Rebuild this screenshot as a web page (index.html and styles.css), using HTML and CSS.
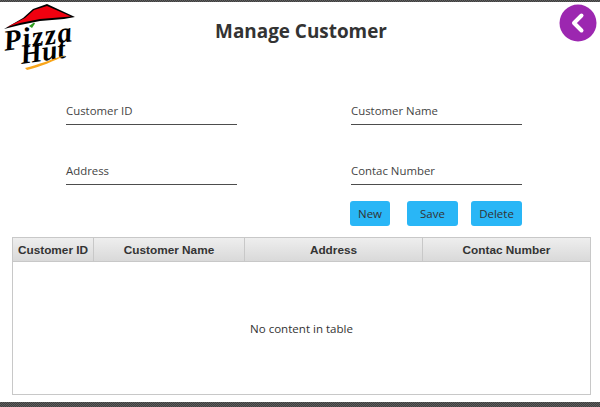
FILE: index.html
```html
<!DOCTYPE html>
<html lang="en">
<head>
    <meta charset="UTF-8">
    <meta name="viewport" content="width=device-width, initial-scale=1.0">
    <title>Manage Customer</title>
    <link rel="stylesheet" href="styles.css">
</head>
<body>
    <div class="window">
        <div class="strip strip-top"></div>
        <!-- Header -->
        <header class="header">
            <div class="logo">
                <svg class="logo-hat" width="76" height="30" viewBox="0 0 76 30">
                    <path d="M4 29 L23 18 L33 9 L47 4 L75 17 L64 19 L40 21 L20 25 Z" fill="#000"/>
                    <path d="M7 27 L25 18 L34 10 L47 6 L71 16.500 L40 19 L20 23 Z" fill="#f0000f"/>
                    <path d="M29 26 L34 22.500 L35 23.500 L32 28 Z" fill="#2f9e1f"/>
                </svg>
                <span class="logo-pizza">Pizza</span>
                <span class="logo-hut">Hut</span>
                <svg class="logo-swoosh" width="44" height="16" viewBox="0 0 44 16">
                    <path d="M1 14 C14 11 28 5 42 1 C30 7 16 13 3 16 Z" fill="#f9a51a"/>
                </svg>
            </div>
            <h1 class="title">Manage Customer</h1>
            <button class="back-button" aria-label="Back">
                <svg width="38" height="38" viewBox="0 0 38 38">
                    <circle cx="19" cy="19" r="18.500" fill="#9c27b0"/>
                    <path d="M22.500 11.500 L15 19 L22.500 26.500" fill="none" stroke="#fff" stroke-width="4" stroke-linecap="round" stroke-linejoin="round"/>
                </svg>
            </button>
        </header>

        <!-- Form -->
        <div class="form-grid">
            <div class="field">Customer ID</div>
            <div class="field">Customer Name</div>
            <div class="field">Address</div>
            <div class="field">Contac Number</div>
        </div>
        <div class="button-row">
            <button class="action new">New</button>
            <button class="action save">Save</button>
            <button class="action delete">Delete</button>
        </div>

        <!-- Table -->
        <div class="table-box">
            <div class="table-head">
                <div class="col col-id">Customer ID</div>
                <div class="col col-name">Customer Name</div>
                <div class="col col-address">Address</div>
                <div class="col col-contact">Contac Number</div>
            </div>
            <div class="table-empty">No content in table</div>
        </div>
        <div class="strip strip-bottom"></div>
    </div>
</body>
</html>
```

FILE: styles.css
```css
* {
    margin: 0;
    padding: 0;
    box-sizing: border-box;
}
body, html {
    height: 100%;
    width: 100%;
    background-color: #ffffff;
    overflow: hidden;
}
.window {
    height: 407px;
    display: flex;
    flex-direction: column;
    font-family: "Open Sans", "Liberation Sans", sans-serif;
    color: #333333;
}
.strip {
    background-color: #4d4d4d;
    background-image: repeating-conic-gradient(#3f3f3f 0 25%, #5e5e5e 0 50%);
    background-size: 2px 2px;
}
.strip-top {
    height: 2px;
}
.strip-bottom {
    height: 5px;
    margin-top: auto;
}
/* Header */
.header {
    height: 62px;
    position: relative;
    display: flex;
    justify-content: center;
    padding-top: 16px;
    padding-left: 2px;
}
.title {
    font-size: 18.900px;
    line-height: 26px;
    font-weight: 700;
    color: #333333;
}
.logo {
    position: absolute;
    left: 0;
    top: 0;
    width: 76px;
    height: 68px;
}
.logo-hat {
    position: absolute;
    left: 0;
    top: -2px;
}
.logo-pizza, .logo-hut {
    position: absolute;
    font-family: "Liberation Serif", serif;
    font-style: italic;
    font-weight: 700;
    color: #000000;
    line-height: 30px;
    transform: rotate(-8deg);
}
.logo-pizza {
    left: 3px;
    top: 19px;
    font-size: 29px;
    letter-spacing: 1.500px;
}
.logo-hut {
    left: 20px;
    top: 35px;
    font-size: 28px;
}
.logo-swoosh {
    position: absolute;
    left: 24px;
    top: 52px;
}
.back-button {
    position: absolute;
    right: 3px;
    top: 2px;
    width: 38px;
    height: 38px;
    border: none;
    background: none;
}
/* Form */
.form-grid {
    display: grid;
    grid-template-columns: 171px 171px;
    column-gap: 114px;
    row-gap: 36px;
    padding-left: 66px;
    padding-top: 37px;
}
.field {
    height: 24px;
    padding-top: 1px;
    font-size: 11.400px;
    line-height: 17px;
    border-bottom: 1px solid #4d4d4d;
    color: #444444;
}
.button-row {
    display: flex;
    margin-top: 16px;
    margin-left: 350px;
}
.action {
    height: 25px;
    background-color: #29b6f6;
    border: none;
    border-radius: 3px;
    font-family: "Open Sans", "Liberation Sans", sans-serif;
    font-size: 11.500px;
    color: #333333;
}
.new {
    width: 40px;
}
.save {
    width: 51px;
    margin-left: 17px;
}
.delete {
    width: 51px;
    margin-left: 13px;
}
/* Table */
.table-box {
    margin: 11px 9px 0 12px;
    height: 158px;
    border: 1px solid #c8c8c8;
    display: flex;
    flex-direction: column;
}
.table-head {
    height: 24px;
    display: flex;
    background: linear-gradient(#eeeeee, #d9d9d9);
    border-bottom: 1px solid #c8c8c8;
}
.col {
    font-family: "Liberation Sans", sans-serif;
    font-size: 11.800px;
    font-weight: 700;
    line-height: 24px;
    text-align: center;
    color: #333333;
    border-right: 1px solid #c8c8c8;
}
.col-id {
    width: 81px;
}
.col-name {
    width: 151px;
}
.col-address {
    width: 178px;
}
.col-contact {
    flex: 1;
    border-right: none;
}
.table-empty {
    flex: 1;
    display: flex;
    justify-content: center;
    align-items: center;
    font-size: 11.550px;
    color: #333333;
}
```
